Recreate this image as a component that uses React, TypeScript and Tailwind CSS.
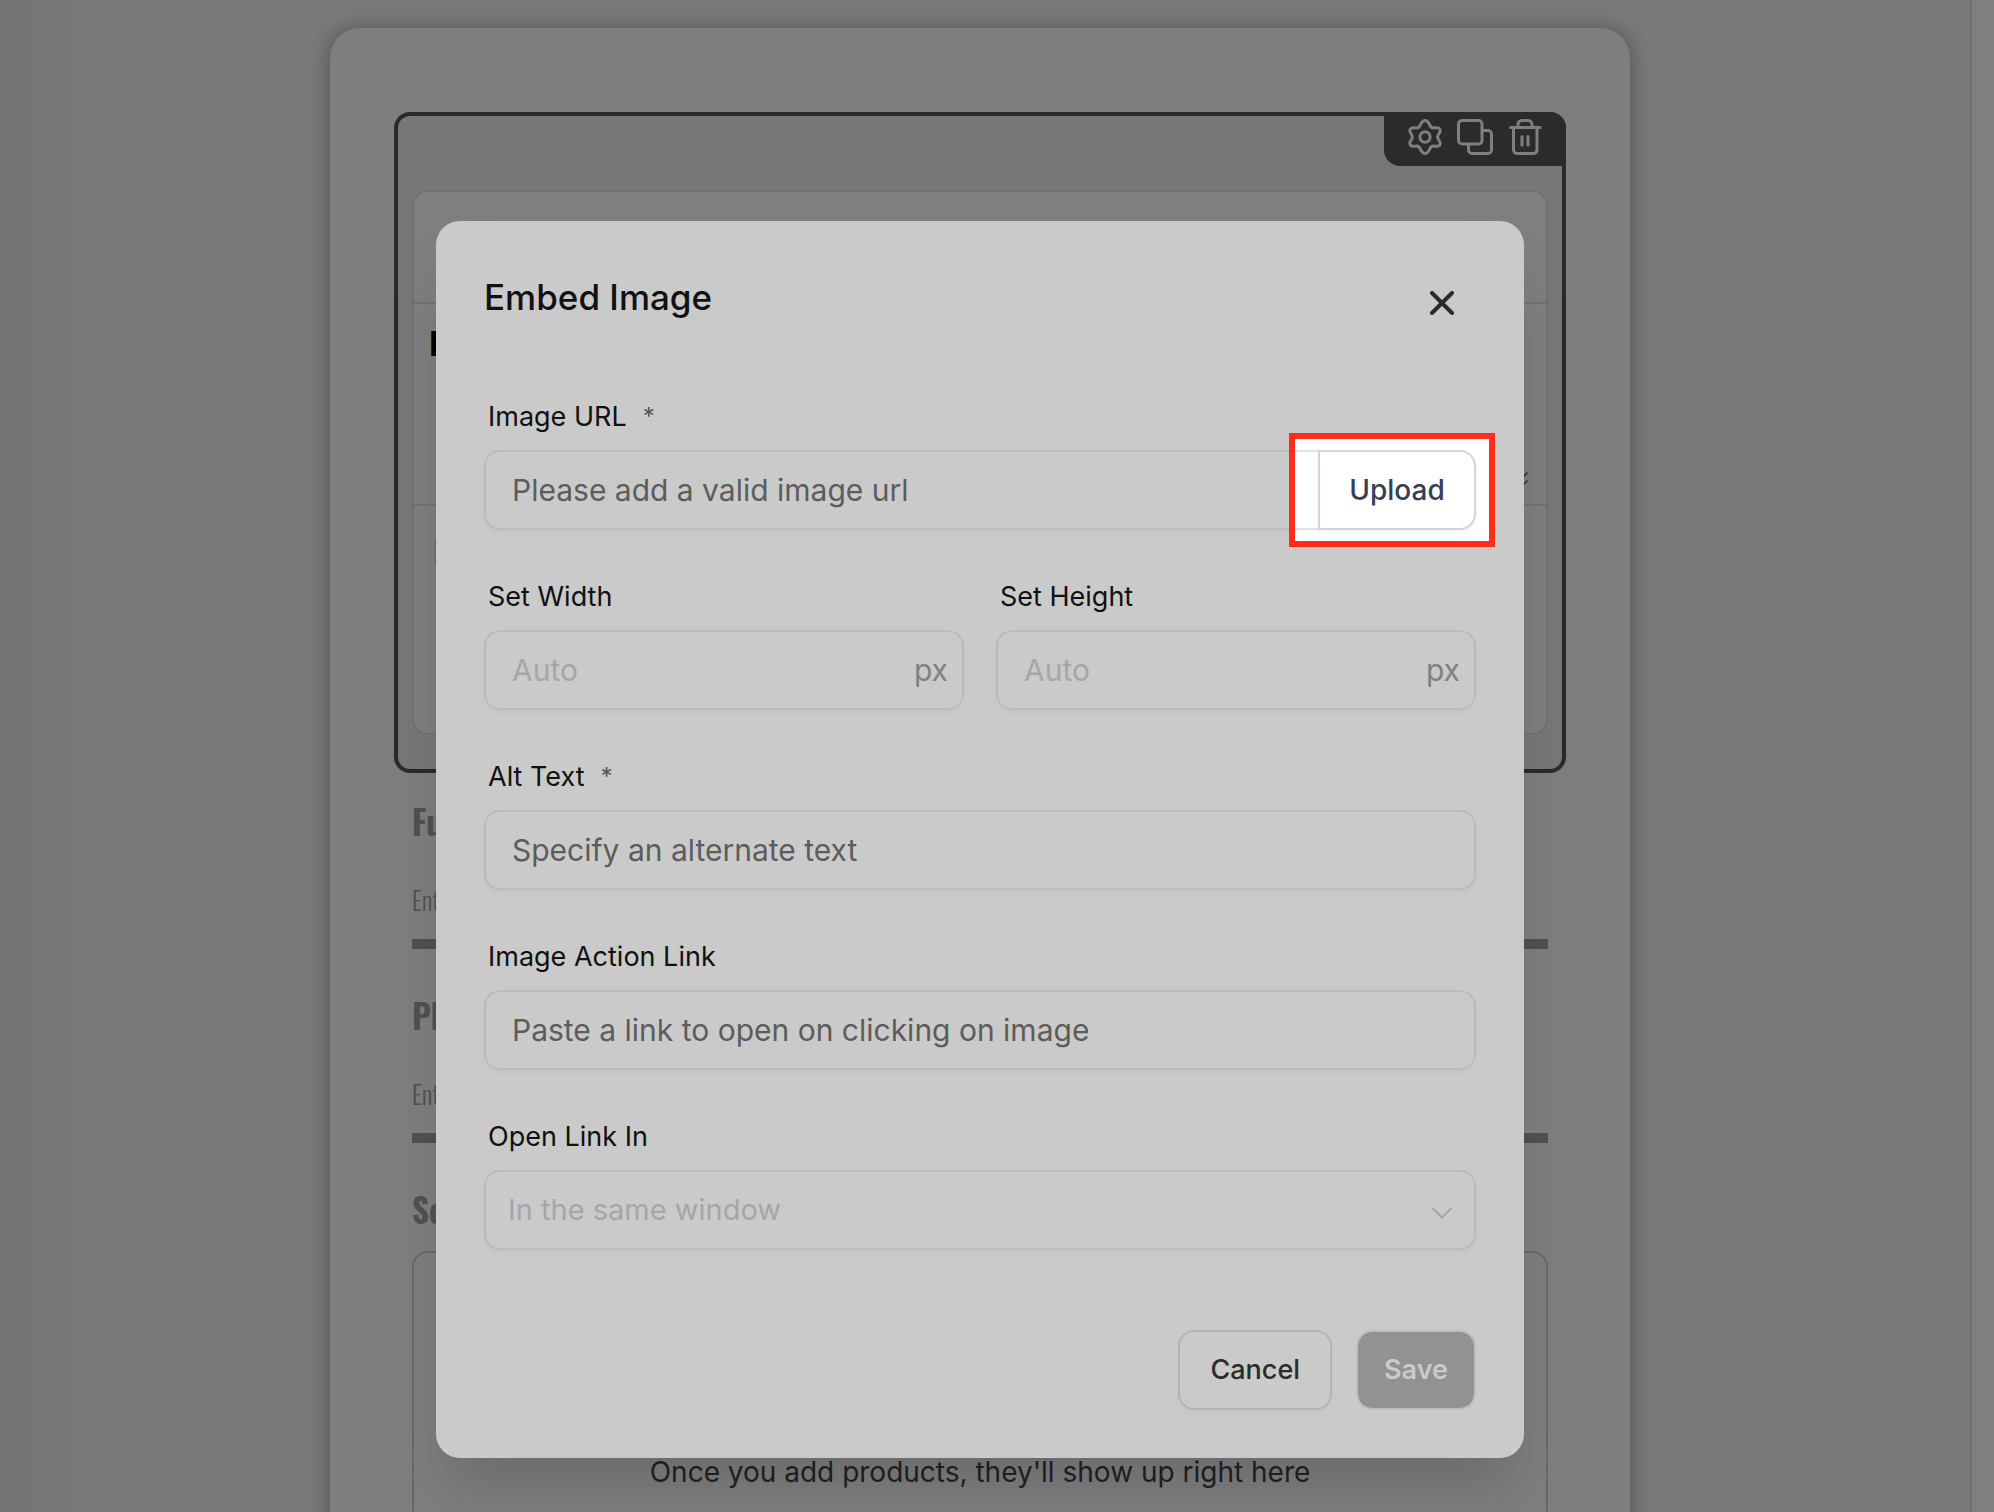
import React from "react";

const inputBox =
  "h-20 w-full rounded-2xl border-2 border-[#bcbcbc] bg-transparent px-[26px] text-[30px] shadow-[0_2px_4px_rgba(0,0,0,0.03)] outline-none";

function GearIcon() {
  return (
    <svg viewBox="-18 -18 36 36" className="size-9" fill="none" stroke="currentColor" strokeWidth="3" strokeLinejoin="round">
      <path d="M0 -16.5C2.8 -16.5 4 -13.6 5 -11.5C6 -9.4 7.4 -8.8 9.8 -9.2C13 -9.7 15 -8.6 15.2 -6.4C15.4 -4 12.6 -2.6 12.6 0C12.6 2.6 15.4 4 15.2 6.4C15 8.6 13 9.7 9.8 9.2C7.4 8.8 6 9.4 5 11.5C4 13.6 2.8 16.5 0 16.5C-2.8 16.5 -4 13.6 -5 11.5C-6 9.4 -7.4 8.8 -9.8 9.2C-13 9.7 -15 8.6 -15.2 6.4C-15.4 4 -12.6 2.6 -12.6 0C-12.6 -2.6 -15.4 -4 -15.2 -6.4C-15 -8.6 -13 -9.7 -9.8 -9.2C-7.4 -8.8 -6 -9.4 -5 -11.5C-4 -13.6 -2.8 -16.5 0 -16.5Z" />
      <circle cx="0" cy="0" r="5.2" />
    </svg>
  );
}

function CopyIcon() {
  return (
    <svg viewBox="0 0 36 36" className="size-9" fill="none" stroke="currentColor" strokeWidth="3">
      <rect x="1.5" y="1.5" width="23.5" height="23.5" rx="3.5" />
      <path d="M25 11.5h6a3.5 3.5 0 0 1 3.5 3.5v16a3.5 3.5 0 0 1 -3.5 3.5h-16a3.5 3.5 0 0 1 -3.5 -3.5v-6" />
    </svg>
  );
}

function TrashIcon() {
  return (
    <svg viewBox="0 0 36 36" className="size-9" fill="none" stroke="currentColor" strokeWidth="3" strokeLinecap="round">
      <path d="M3.5 8.5h29.5M6.5 8.5v22a4 4 0 0 0 4 4h15.5a4 4 0 0 0 4-4v-22M11 8.5v-3a4 4 0 0 1 4-4h6a4 4 0 0 1 4 4v3M15 17.5v8.5M21 17.5v8.5" />
    </svg>
  );
}

function FormField({ id, label, placeholder }: { id: string; label: string; placeholder: string }) {
  return (
    <div className="mb-11 font-['Oswald','Roboto_Condensed','Open_Sans_Condensed','Roboto',sans-serif]">
      <label htmlFor={id} className="block h-12 text-[33px] leading-[46px] font-bold text-[#515151]">
        {label}
      </label>
      <input
        id={id}
        placeholder={placeholder}
        className="mt-8 block h-[70px] w-full border-b-[10px] border-[#515151] bg-transparent pb-5 text-[25px] font-light outline-none placeholder:text-[#515151]"
      />
    </div>
  );
}

function Label({ htmlFor, text, required }: { htmlFor: string; text: string; required?: boolean }) {
  return (
    <label htmlFor={htmlFor} className="flex h-10 gap-4 pl-1 text-[27px] leading-[42px] text-[#111111]">
      {text}
      {required && <span className="text-2xl leading-[42px] text-[#555555]">*</span>}
    </label>
  );
}

function SizeField({ id, label }: { id: string; label: string }) {
  return (
    <div>
      <Label htmlFor={id} text={label} />
      <div className="relative mt-[14px]">
        <input id={id} placeholder="Auto" className={`${inputBox} placeholder:text-[#a6a6a6]`} />
        <span className="absolute inset-y-0 right-4 flex items-center text-[30px] text-[#808080]">px</span>
      </div>
    </div>
  );
}

function EmbedImageDialog() {
  return (
    <div
      role="dialog"
      aria-labelledby="dialog-title"
      className="w-full max-w-[1088px] rounded-3xl bg-[#cacaca] px-12 pt-[52px] pb-12 shadow-[0_40px_60px_-12px_rgba(0,0,0,0.15)]"
    >
      <div className="flex items-start justify-between pb-[75px]">
        <h2 id="dialog-title" className="text-[35px] leading-12 font-medium text-[#111111]">
          Embed Image
        </h2>
        <button aria-label="Close" className="mt-3 mr-4 p-1.5 text-[#2b2b2b]">
          <svg viewBox="0 0 24 24" className="size-6" stroke="currentColor" strokeWidth="4" strokeLinecap="round">
            <path d="M2 2L22 22M22 2L2 22" />
          </svg>
        </button>
      </div>

      <form className="flex flex-col gap-[46px]" onSubmit={(e) => e.preventDefault()}>
        <div>
          <Label htmlFor="image-url" text="Image URL" required />
          <div className="relative mt-[14px] flex">
            <input
              id="image-url"
              placeholder="Please add a valid image url"
              className="h-20 min-w-0 flex-1 rounded-l-2xl border-y-2 border-l-2 border-[#bcbcbc] bg-transparent px-[26px] text-[30px] shadow-[0_2px_4px_rgba(0,0,0,0.03)] outline-none placeholder:text-[#5c5c5c]"
            />
            <div className="pointer-events-none absolute -top-[17px] -right-[19px] -bottom-[17px] w-[206px] border-[6px] border-[#ff2d1a] bg-white py-[11px]">
              <div className="h-20 w-6 border-y-2 border-[#e2e3e8]" />
            </div>
            <button
              type="button"
              className="relative h-20 w-[158px] rounded-r-2xl border-2 border-[#cfd4df] bg-white text-[28px] font-medium text-[#344054] shadow-[0_2px_4px_rgba(16,24,40,0.05)]"
            >
              Upload
            </button>
          </div>
        </div>

        <div className="grid grid-cols-2 gap-8">
          <SizeField id="width" label="Set Width" />
          <SizeField id="height" label="Set Height" />
        </div>

        <div>
          <Label htmlFor="alt" text="Alt Text" required />
          <input id="alt" placeholder="Specify an alternate text" className={`${inputBox} mt-[14px] block placeholder:text-[#5c5c5c]`} />
        </div>

        <div>
          <Label htmlFor="action" text="Image Action Link" />
          <input
            id="action"
            placeholder="Paste a link to open on clicking on image"
            className={`${inputBox} mt-[14px] block placeholder:text-[#5c5c5c]`}
          />
        </div>

        <div>
          <Label htmlFor="target" text="Open Link In" />
          <div className="relative mt-[14px]">
            <select
              id="target"
              className="block h-20 w-full appearance-none rounded-2xl border-2 border-[#bcbcbc] bg-transparent px-[22px] text-[29px] text-[#a6a6a6] shadow-[0_2px_4px_rgba(0,0,0,0.03)] outline-none"
            >
              <option>In the same window</option>
            </select>
            <svg
              viewBox="0 0 20 12"
              className="pointer-events-none absolute top-[37px] right-6 h-3 w-5 text-[#a6a6a6]"
              fill="none"
              stroke="currentColor"
              strokeWidth="2"
              strokeLinecap="round"
            >
              <path d="M1 1.5L10 10.5L19 1.5" />
            </svg>
          </div>
        </div>

        <div className="mt-[34px] flex justify-end gap-6">
          <button
            type="button"
            className="h-20 rounded-2xl border-2 border-[#b4b4b4] px-[30px] text-[27px] font-medium text-[#2b2b2b] shadow-[0_2px_4px_rgba(0,0,0,0.03)]"
          >
            Cancel
          </button>
          <button
            type="submit"
            className="h-20 rounded-2xl border-2 border-[#bebebe] bg-[#929292] bg-clip-padding px-[26px] text-[27px] font-semibold text-[#cacaca]"
          >
            Save
          </button>
        </div>
      </form>
    </div>
  );
}

function SelectedBlock() {
  return (
    <section className="relative rounded-2xl border-4 border-[#2b2b2b] bg-[#777777] px-[14px] pt-[74px] pb-[34px]">
      <div className="absolute -top-1 -right-1 flex gap-[14px] rounded-tr-2xl rounded-bl-2xl bg-[#2b2b2b] px-[23px] pt-[7px] pb-[11px] text-[#7f7f7f]">
        <button aria-label="Settings"><GearIcon /></button>
        <button aria-label="Duplicate"><CopyIcon /></button>
        <button aria-label="Delete"><TrashIcon /></button>
      </div>
      <div className="rounded-2xl border-2 border-[#717171] bg-[#7f7f7f]">
        <div className="h-[112px] border-b-2 border-[#717171]" />
        <div className="flex h-[202px] justify-between border-b-2 border-[#717171] pl-[15px] text-[34px] font-bold text-black">
          <p className="pt-5 leading-10">Image</p>
          <svg viewBox="0 0 20 18" className="mt-[167px] mr-[18px] h-[18px] w-5" stroke="#2b2b2b" strokeWidth="1.5">
            <path d="M10 12L19.5 1.5M12 17L19.5 9.5" />
          </svg>
        </div>
        <div className="h-[227px] px-5 pt-[26px]">
          <div className="h-10 w-40 rounded-xl border-2 border-[#707070]" />
        </div>
      </div>
    </section>
  );
}

export default function App() {
  return (
    <div className="relative flex h-screen overflow-hidden bg-[#797979] font-['Inter',sans-serif]">
      <div className="pointer-events-none absolute inset-y-0 left-0 w-25 bg-linear-to-r from-black/5 to-transparent" />
      <main className="flex flex-1 justify-center pt-7 pr-[10px]">
        <div className="min-h-screen w-full max-w-[1300px] rounded-t-[30px] bg-[#7e7e7e] px-16 pt-[84px] shadow-[0_2px_16px_6px_rgba(0,0,0,0.2)]">
          <SelectedBlock />
          <div className="px-[18px] pt-[26px]">
            <FormField id="full-name" label="Full Name" placeholder="Enter your name" />
            <FormField id="phone" label="Phone" placeholder="Enter your phone" />
            <h3 className="h-12 font-['Oswald','Roboto_Condensed','Open_Sans_Condensed','Roboto',sans-serif] text-[33px] leading-[46px] font-bold text-[#515151]">
              Selected Products
            </h3>
            <div className="mt-4 rounded-2xl border-2 border-[#696969] pt-[199px] pb-25 text-center text-[28px] leading-10 text-[#222222]">
              Once you add products, they'll show up right here
            </div>
          </div>
        </div>
      </main>
      <aside className="w-6 border-l-2 border-[#717171] bg-[#7f7f7f]" />
      <div className="absolute inset-0 flex items-start justify-center pt-[221px] pr-[34px]">
        <EmbedImageDialog />
      </div>
    </div>
  );
}
